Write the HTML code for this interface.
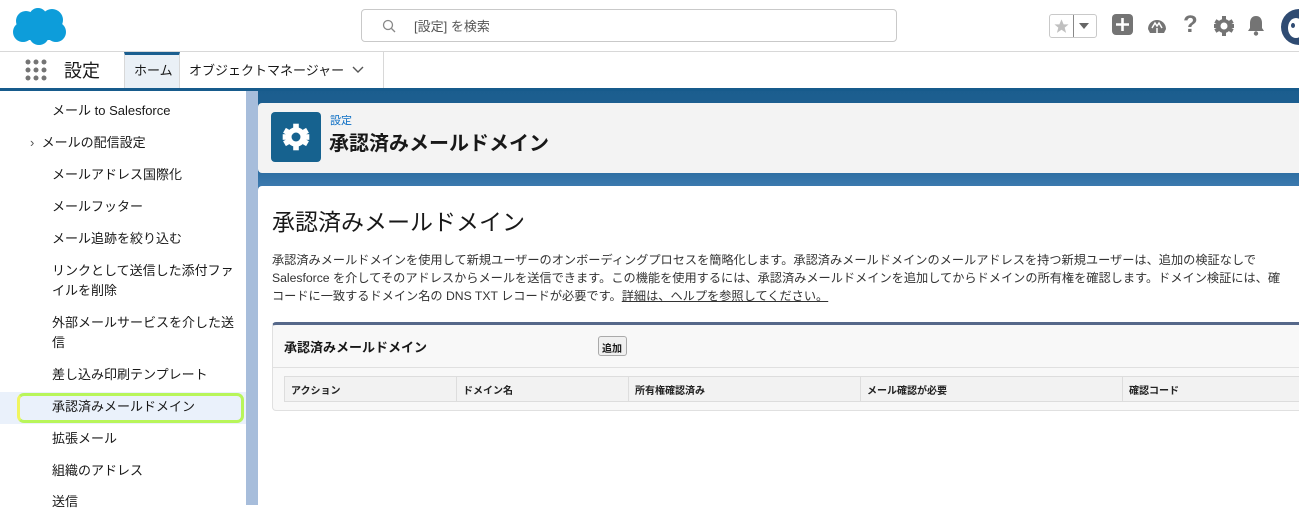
<!DOCTYPE html>
<html><head><meta charset="utf-8"><style>
*{box-sizing:border-box;margin:0;padding:0}
body{width:1299px;height:505px;overflow:hidden;background:#fff;font-family:"Liberation Sans","Noto Sans CJK JP",sans-serif;color:#181818;position:relative}
.abs{position:absolute}
.hdr{left:0;top:0;width:1299px;height:52px;border-bottom:1px solid #d8d8d8;background:#fff}
.search{left:361px;top:9px;width:536px;height:33px;border:1px solid #c9c9c9;border-radius:4px;font-size:13px;color:#555}
.nav{left:0;top:52px;width:1299px;height:36px;background:#fff}
.blue{left:246px;top:88px;width:1053px;height:417px;background:linear-gradient(180deg,#1b5d8e 0,#1f6296 70px,#3e7bb0 100px,#8fb2d6 200px,#c8d9ec 417px)}
.topline{left:0;top:88px;width:1299px;height:3px;background:#175b8c}
.side{left:0;top:91px;width:246px;height:414px;background:#fff;font-size:13px}
.side div{position:absolute;left:52px;line-height:20px}
.strip{left:246px;top:91px;width:12px;height:414px;background:#a7bddb}
th{font-weight:bold;font-size:10px;text-align:left;padding:0 6px;border-right:1px solid #ddd}
</style></head><body>
<div class="abs hdr"></div>
<svg class="abs" style="left:10px;top:6px" width="60" height="42" viewBox="0 0 60 42"><g fill="#0d9dda"><circle cx="16" cy="15" r="10"/><circle cx="28" cy="11" r="9"/><circle cx="42" cy="14" r="11"/><circle cx="13" cy="26" r="10"/><circle cx="29" cy="29" r="10"/><circle cx="46" cy="26" r="10"/><rect x="12" y="14" width="36" height="20"/></g></svg>
<div class="abs search"><svg class="abs" style="left:20px;top:9px" width="14" height="14"><circle cx="6" cy="6" r="4.5" fill="none" stroke="#888" stroke-width="1.3"/><path d="M9.5 9.5L13 13" stroke="#888" stroke-width="1.3"/></svg><span class="abs" style="left:52px;top:6px">[設定] を検索</span></div>
<div class="abs" style="left:1049px;top:14px;width:48px;height:24px;border:1px solid #c9c9c9;border-radius:3px"><svg class="abs" style="left:3px;top:3px" width="17" height="17" viewBox="0 0 24 24"><path d="M12 2l3 7h7l-5.5 4.5 2 7.5L12 16.5 5.5 21l2-7.5L2 9h7z" fill="#c0c0c0"/></svg><div class="abs" style="left:23px;top:0;width:1px;height:22px;background:#888"></div><svg class="abs" style="left:29px;top:8px" width="10" height="6"><path d="M0 0H10L5 6Z" fill="#666"/></svg></div>
<svg class="abs" style="left:1112px;top:14px" width="21" height="21"><rect width="21" height="21" rx="4" fill="#747474"/><path d="M10.5 4v13M4 10.5h13" stroke="#fff" stroke-width="2.6"/></svg>
<svg class="abs" style="left:1146px;top:15px" width="22" height="20"><path d="M2 14A9 9 0 0 1 20 14L18 18H4Z" fill="#747474"/><path d="M6 13l3-5 2 3 2-3 3 5M11 13v5" stroke="#fff" stroke-width="1.5" fill="none"/></svg>
<span class="abs" style="left:1183px;top:11px;font-size:24px;color:#747474;font-weight:bold">?</span>
<svg class="abs" style="left:1214px;top:16px" width="20" height="20"><g fill="#747474"><circle cx="10" cy="10" r="7"/><rect x="8" y="0" width="4" height="20"/><rect x="0" y="8" width="20" height="4"/><rect x="8" y="0" width="4" height="20" transform="rotate(60 10 10)"/><rect x="8" y="0" width="4" height="20" transform="rotate(-60 10 10)"/></g><circle cx="10" cy="10" r="3.5" fill="#fff"/></svg>
<svg class="abs" style="left:1246px;top:15px" width="20" height="21"><path d="M10 1C6 1 4 4 4 8v5l-2 3h16l-2-3V8C16 4 14 1 10 1Z" fill="#747474"/><circle cx="10" cy="18.5" r="2.2" fill="#747474"/></svg>
<div class="abs" style="left:1281px;top:9px;width:36px;height:36px;border-radius:50%;background:#2f4b72"><div class="abs" style="left:7px;top:9px;width:16px;height:20px;border-radius:50%;background:#fff"></div><div class="abs" style="left:10px;top:14px;width:4px;height:5px;border-radius:50%;background:#2f4b72"></div></div>
<div class="abs nav"></div>
<svg class="abs" style="left:25px;top:59px" width="22" height="22"><g fill="#747474"><circle cx="3" cy="3" r="2.5"/><circle cx="11" cy="3" r="2.5"/><circle cx="19" cy="3" r="2.5"/><circle cx="3" cy="11" r="2.5"/><circle cx="11" cy="11" r="2.5"/><circle cx="19" cy="11" r="2.5"/><circle cx="3" cy="19" r="2.5"/><circle cx="11" cy="19" r="2.5"/><circle cx="19" cy="19" r="2.5"/></g></svg>
<span class="abs" style="left:64px;top:57px;font-size:18px">設定</span>
<div class="abs" style="left:124px;top:52px;width:56px;height:36px;background:#eaf0f6;border-top:3px solid #1b5f90;border-right:1px solid #d8d8d8;border-left:1px solid #d8d8d8;font-size:13px;padding:5px 0 0 9px">ホーム</div>
<span class="abs" style="left:189px;top:60px;font-size:13px">オブジェクトマネージャー</span>
<svg class="abs" style="left:352px;top:66px" width="12" height="8"><path d="M1 1l5 5 5-5" stroke="#555" stroke-width="1.4" fill="none"/></svg>
<div class="abs" style="left:383px;top:52px;width:1px;height:36px;background:#d8d8d8"></div>
<div class="abs blue"></div>
<div class="abs topline"></div>
<div class="abs side">
<div style="top:10px">メール to Salesforce</div>
<div style="top:42px;left:30px"><span style="color:#555">›</span>&nbsp;&nbsp;メールの配信設定</div>
<div style="top:74px">メールアドレス国際化</div>
<div style="top:106px">メールフッター</div>
<div style="top:138px">メール追跡を絞り込む</div>
<div style="top:170px">リンクとして送信した添付ファ<br>イルを削除</div>
<div style="top:222px">外部メールサービスを介した送<br>信</div>
<div style="top:274px">差し込み印刷テンプレート</div>
<div style="top:301px;left:0;width:246px;height:32px;background:#eaf1fb"></div>
<div style="top:302px;left:17px;width:227px;height:30px;border:3px solid #b8f55a;border-left-color:#f0f560;border-radius:7px"></div>
<div style="top:306px">承認済みメールドメイン</div>
<div style="top:338px">拡張メール</div>
<div style="top:370px">組織のアドレス</div>
<div style="top:401px">送信</div>
</div>
<div class="abs strip"></div>
<div class="abs" style="left:258px;top:103px;width:1041px;height:70px;background:#f3f3f3;border-radius:4px 0 0 4px"></div>
<div class="abs" style="left:271px;top:112px;width:50px;height:50px;background:#16628f;border-radius:4px"></div>
<svg class="abs" style="left:282px;top:123px" width="28" height="28" viewBox="0 0 20 20"><g fill="#fff"><circle cx="10" cy="10" r="7"/><rect x="8" y="0.5" width="4" height="19"/><rect x="0.5" y="8" width="19" height="4"/><rect x="8" y="0.5" width="4" height="19" transform="rotate(60 10 10)"/><rect x="8" y="0.5" width="4" height="19" transform="rotate(-60 10 10)"/></g><circle cx="10" cy="10" r="3.2" fill="#16628f"/></svg>
<span class="abs" style="left:330px;top:112px;font-size:11px;color:#0b6ec4">設定</span>
<span class="abs" style="left:329px;top:127px;font-size:20px;font-weight:bold">承認済みメールドメイン</span>
<div class="abs" style="left:258px;top:186px;width:1041px;height:319px;background:#fff;border-radius:4px 0 0 0"></div>
<span class="abs" style="left:272px;top:203px;font-size:23px">承認済みメールドメイン</span>
<div class="abs" style="left:272px;top:251px;width:1040px;font-size:12.2px;line-height:18px;color:#333;white-space:nowrap">承認済みメールドメインを使用して新規ユーザーのオンボーディングプロセスを簡略化します。承認済みメールドメインのメールアドレスを持つ新規ユーザーは、追加の検証なしで<br>Salesforce を介してそのアドレスからメールを送信できます。この機能を使用するには、承認済みメールドメインを追加してからドメインの所有権を確認します。ドメイン検証には、確<br>コードに一致するドメイン名の DNS TXT レコードが必要です。<u>詳細は、ヘルプを参照してください。</u></div>
<div class="abs" style="left:272px;top:322px;width:1040px;height:89px;background:#f8f8f8;border:1px solid #e0e0e0;border-top:3px solid #56688a;border-radius:4px 0 0 4px"></div>
<span class="abs" style="left:284px;top:337px;font-size:13px;font-weight:bold">承認済みメールドメイン</span>
<div class="abs" style="left:598px;top:336px;width:29px;height:20px;border:1px solid #aaa;border-radius:3px;background:#f0f0f0;font-size:10px;font-weight:bold;padding:3px 0 0 3px">追加</div>
<div class="abs" style="left:272px;top:367px;width:1030px;height:1px;background:#e0e0e0"></div>
<table class="abs" style="left:284px;top:376px;width:1020px;height:26px;border:1px solid #ddd;border-collapse:collapse;background:#f2f2f2;color:#222"><tr><th style="width:172px">アクション</th><th style="width:172px">ドメイン名</th><th style="width:232px">所有権確認済み</th><th style="width:262px">メール確認が必要</th><th>確認コード</th></tr></table>
</body></html>
